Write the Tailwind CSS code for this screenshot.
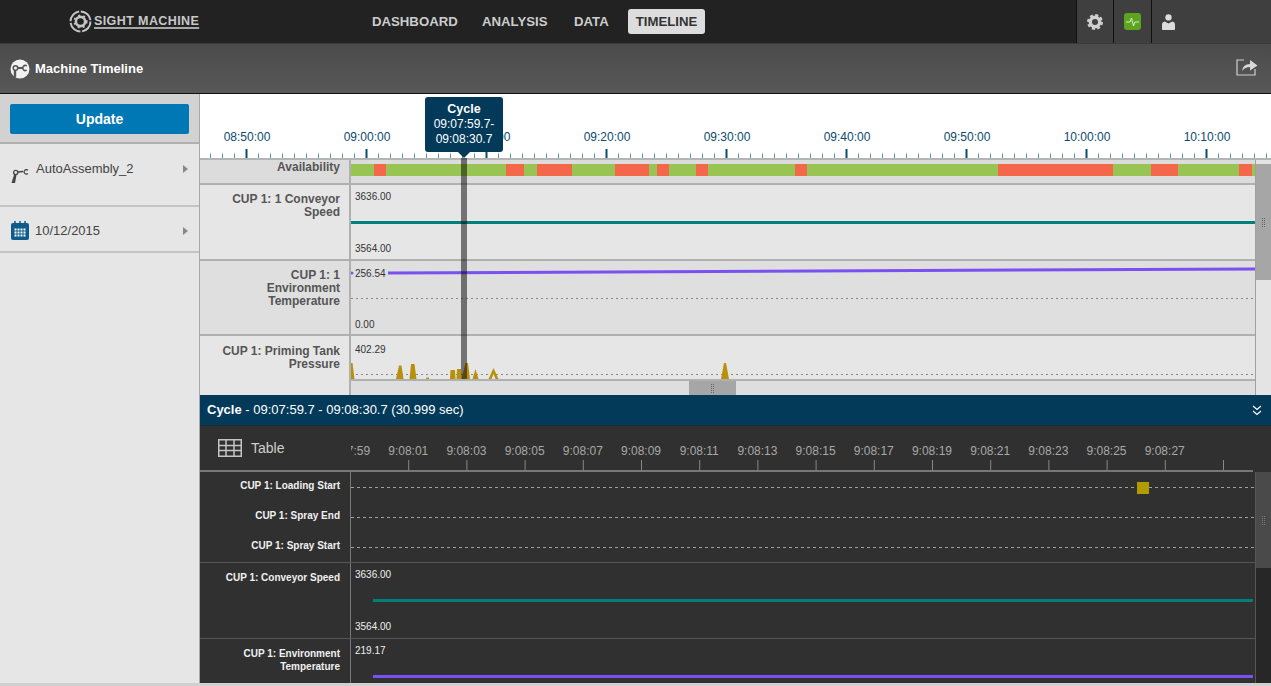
<!DOCTYPE html>
<html lang="en">
<head>
<meta charset="utf-8"/>
<title>Machine Timeline</title>
<script src="https://cdn.jsdelivr.net/npm/@tailwindcss/browser@4"></script>
</head>
<body class="w-[1271px] h-[686px] overflow-hidden bg-[#e6e6e6] font-['Liberation_Sans',Arial,sans-serif]">

<!-- top nav -->
<header class="h-[44px] flex bg-[#222222] border-b border-[#3a3a3a]">
  <div class="w-[372px] shrink-0 flex items-center pl-[69px]">
    <svg width="23" height="23" viewBox="0 0 23 23" fill="none" stroke="#c4c4c4">
      <circle cx="11.500" cy="11.500" r="10" stroke-width="2" stroke-dasharray="14 1.700"/>
      <circle cx="11.500" cy="11.500" r="4.600" stroke-width="2.600"/>
      <circle cx="11.500" cy="11.500" r="6.300" stroke-width="1.500" stroke-dasharray="2 3.300"/>
    </svg>
    <span class="ml-[2px] text-[12.500px] font-bold text-[#c8c8c8] tracking-[0.4px] underline decoration-2 decoration-[#a8a8a8] underline-offset-[2px] whitespace-nowrap">SIGHT MACHINE</span>
  </div>
  <nav class="flex items-center text-[13.200px] font-bold text-[#cccccc]">
    <a class="w-[110px]">DASHBOARD</a>
    <a class="w-[92px]">ANALYSIS</a>
    <a class="w-[54px]">DATA</a>
    <a class="w-[77px] h-[25px] flex items-center justify-center rounded-[3px] bg-[#dddddd] text-[#333333]">TIMELINE</a>
  </nav>
  <div class="ml-auto w-[195px] flex bg-[#3f3f3f] border-l border-[#111111]">
    <div class="w-[37px] flex items-center justify-center pr-[1px] border-r border-[#111111]">
      <svg width="16" height="16" viewBox="0 0 17 17" fill="none" stroke="#cfcfcf">
        <circle cx="8.500" cy="8.500" r="5" stroke-width="3.600"/>
        <circle cx="8.500" cy="8.500" r="7" stroke-width="3" stroke-dasharray="3.100 2.400"/>
      </svg>
    </div>
    <div class="w-[38px] flex items-center justify-center border-r border-[#111111]">
      <div class="w-[17px] h-[17px] rounded-[3px] bg-[#5ea51f] flex items-center justify-center">
        <svg width="13" height="11" viewBox="0 0 13 11" fill="none" stroke="#e8f3dc" stroke-width="0.900"><path d="M0 6h4l1.500-4 2 8 1.300-4H13"/></svg>
      </div>
    </div>
    <div class="w-[34px] flex items-center justify-center pr-[2px]">
      <svg width="13" height="16" viewBox="0 0 14 17" fill="#dcdcdc"><circle cx="7" cy="3.600" r="3.400"/><path d="M1 17a1 1 0 0 1-1-1v-4.500q0-3 3-3.500l4 2 4-2q3 .5 3 3.500V16a1 1 0 0 1-1 1z"/></svg>
    </div>
  </div>
</header>

<!-- title bar -->
<div class="h-[50px] flex items-center pl-[10px] pr-[13px] bg-gradient-to-b from-[#4b4b4b] to-[#585858] border-b border-[#111111]">
  <svg width="20" height="20" viewBox="0 0 20 20">
    <circle cx="10" cy="10" r="9.500" fill="#f2f2f2"/>
    <path d="M5 18V10" stroke="#555555" stroke-width="2.400"/>
    <circle cx="5.500" cy="9" r="2.300" fill="#f2f2f2" stroke="#555555" stroke-width="1.500"/>
    <path d="M7.500 9h5" stroke="#555555" stroke-width="2"/>
    <path d="M16.800 7a2.500 2.500 0 1 0 0 4" fill="none" stroke="#555555" stroke-width="1.500"/>
  </svg>
  <h1 class="ml-[5px] text-[13px] font-bold text-white">Machine Timeline</h1>
  <svg class="ml-auto mb-[3px]" width="22" height="18" viewBox="0 0 22 18" fill="none">
    <path d="M8 2H1v15h18v-6" stroke="#d0d0d0" stroke-width="1.200"/>
    <path d="M6 13q1-7 8-7V2l7.500 5.500L14 12.500V9q-5 0-8 4z" fill="#d8d8d8"/>
  </svg>
</div>

<div class="flex h-[589px]">
  <!-- sidebar -->
  <aside class="w-[200px] shrink-0 border-r border-[#a8a8a8] bg-[#e6e6e6]">
    <div class="h-[50px] px-[10px] pt-[10px] bg-[#d2d2d2] border-b-2 border-[#b0b0b0]">
      <button class="w-[179px] h-[30px] rounded-[2px] bg-[#0078b6] text-[14px] font-bold text-white">Update</button>
    </div>
    <div class="h-[63px] flex pl-[11px] pr-[11px] border-b-2 border-[#c4c4c4]">
      <svg class="mt-[25px]" width="18" height="14" viewBox="0 0 18 14" fill="none" stroke="#444444">
        <path d="M0.500 14L3 6H5.500L4 14Z" fill="#444444" stroke="none"/>
        <circle cx="4.700" cy="3.500" r="2.100" stroke-width="1.300"/>
        <path d="M6.800 3L12 2.500" stroke-width="1.400"/>
        <path d="M16.800 1.200a2.200 2.200 0 1 0 0 3.300" stroke-width="1.200"/>
      </svg>
      <span class="ml-[7px] mt-[17px] text-[13px] leading-[16px] text-[#444444]">AutoAssembly_2</span>
      <span class="ml-auto mt-[21px] w-0 h-0 border-y-[4px] border-y-transparent border-l-[5px] border-l-[#888888]"></span>
    </div>
    <div class="h-[46px] flex items-center pt-[3px] pl-[11px] pr-[11px] border-b-2 border-[#c4c4c4]">
      <svg width="18" height="19" viewBox="0 0 18 19">
        <rect y="2" width="18" height="17" rx="2" fill="#0d5c8c"/>
        <path d="M4 0v3M9 0v3M14 0v3" stroke="#0d5c8c" stroke-width="1.500"/>
        <path d="M3.500 8.500h11M3.500 11.500h11M3.500 14.500h11" stroke="#ffffff" stroke-width="2" stroke-dasharray="2 1"/>
      </svg>
      <span class="ml-[6px] text-[13px] text-[#444444]">10/12/2015</span>
      <span class="ml-auto w-0 h-0 border-y-[4px] border-y-transparent border-l-[5px] border-l-[#888888]"></span>
    </div>
  </aside>

  <main class="w-[1071px] flex flex-col">
    <!-- overview timeline -->
    <section class="relative h-[301px] shrink-0 flex flex-col">
      <div class="relative h-[64px] shrink-0 bg-white overflow-hidden">
        <div class="flex -ml-[13px] pt-[35px] text-[12px] leading-[16px] text-[#0c4a6e] text-center">
          <span class="w-[120px] shrink-0">08:50:00</span>
          <span class="w-[120px] shrink-0">09:00:00</span>
          <span class="w-[120px] shrink-0">09:10:00</span>
          <span class="w-[120px] shrink-0">09:20:00</span>
          <span class="w-[120px] shrink-0">09:30:00</span>
          <span class="w-[120px] shrink-0">09:40:00</span>
          <span class="w-[120px] shrink-0">09:50:00</span>
          <span class="w-[120px] shrink-0">10:00:00</span>
          <span class="w-[120px] shrink-0">10:10:00</span>
        </div>
        <svg class="absolute left-0 top-0" width="1071" height="64">
          <path d="M10 62H1071" stroke="#5b93b0" stroke-width="5" stroke-dasharray="1 11"/>
          <path d="M45.500 59.500H1071" stroke="#0c4a6e" stroke-width="9" stroke-dasharray="2 118"/>
        </svg>
      </div>

      <div class="flex flex-1 min-h-0 border-t-2 border-[#b4b4b4]">
        <div class="w-[1055px] flex flex-col">
          <!-- availability -->
          <div class="h-[25px] shrink-0 flex bg-[#dcdcdc] border-b-2 border-[#b0b0b0]">
            <div class="w-[151px] shrink-0 pr-[9px] text-right text-[12px] leading-[14px] font-bold text-[#555555] border-r-2 border-[#b0b0b0]">Availability</div>
            <svg class="mt-[4px]" width="904" height="12">
              <rect width="904" height="12" fill="#98c454"/>
              <g fill="#f4674a">
                <rect x="23" width="12" height="12"/>
                <rect x="155" width="18" height="12"/>
                <rect x="186" width="35" height="12"/>
                <rect x="264" width="34" height="12"/>
                <rect x="306" width="12" height="12"/>
                <rect x="345" width="12" height="12"/>
                <rect x="444" width="12" height="12"/>
                <rect x="647" width="115" height="12"/>
                <rect x="800" width="27" height="12"/>
                <rect x="888" width="13" height="12"/>
              </g>
            </svg>
          </div>
          <!-- conveyor speed -->
          <div class="h-[76px] shrink-0 flex bg-[#e6e6e6] border-b-2 border-[#b0b0b0]">
            <div class="w-[151px] shrink-0 pr-[9px] pt-[8px] text-right text-[12px] leading-[13px] font-bold text-[#555555] border-r-2 border-[#b0b0b0]">CUP 1: 1 Conveyor<br/>Speed</div>
            <div class="relative flex-1 flex flex-col justify-between pl-[4px] pt-[6px] pb-[4px] text-[10px] leading-[12px] text-[#333333]">
              <svg class="absolute left-0 top-0" width="904" height="74"><rect y="36" width="904" height="3" fill="#007f7c"/></svg>
              <span>3636.00</span><span>3564.00</span>
            </div>
          </div>
          <!-- environment temperature -->
          <div class="h-[75px] shrink-0 flex bg-[#dfdfdf] border-b-2 border-[#b0b0b0]">
            <div class="w-[151px] shrink-0 pr-[9px] pt-[8px] text-right text-[12px] leading-[13px] font-bold text-[#555555] border-r-2 border-[#b0b0b0]">CUP 1: 1<br/>Environment<br/>Temperature</div>
            <div class="relative flex-1 flex flex-col justify-between pl-[4px] pt-[7px] pb-[3px] text-[10px] leading-[12px] text-[#333333]">
              <svg class="absolute left-0 top-0" width="904" height="73" fill="none">
                <path d="M0 37.500H904" stroke="#888888" stroke-dasharray="2 3"/>
                <path d="M37 12L904 8" stroke="#7a50f0" stroke-width="3"/>
                <circle cx="1" cy="12" r="1.500" fill="#7a50f0"/>
              </svg>
              <span class="relative">256.54</span><span class="relative">0.00</span>
            </div>
          </div>
          <!-- priming tank pressure -->
          <div class="flex-1 min-h-0 flex bg-[#e6e6e6]">
            <div class="w-[151px] shrink-0 pr-[9px] pt-[9px] text-right text-[12px] leading-[13px] font-bold text-[#555555] border-r-2 border-[#b0b0b0]">CUP 1: Priming Tank<br/>Pressure</div>
            <div class="flex-1 flex flex-col">
              <div class="relative h-[43px] shrink-0 pl-[4px] pt-[8px] text-[10px] leading-[12px] text-[#333333]">
                <svg class="absolute left-0 top-0" width="904" height="43">
                  <path d="M0 38.500H904" stroke="#888888" stroke-dasharray="2 3"/>
                  <path fill="#b8900a" d="M0 43V27H1.500L3.500 43ZM45 43L48 29.500H50.500L52.500 43ZM58.500 43L60 28H63.500L65.500 43ZM75 43L75.500 41.500H78V43ZM99 43L99.500 34H104L104.500 43ZM105.500 43L106 33H110V43ZM110.500 43L114.500 27H117L119 43ZM121.500 43L124.500 33L127.500 43ZM137.500 43L142.500 32L147.500 43H144.500L142.500 38L140.500 43ZM370 43L373 27H375L378 43Z"/>
                </svg>
                <span class="relative">402.29</span>
              </div>
              <div class="h-[16px] shrink-0 flex bg-[#dedede] border-t-2 border-[#b0b0b0] pl-[338px]">
                <div class="w-[47px] flex items-center justify-center bg-[#a6a6a6]">
                  <span class="w-[3px] h-[9px] border-x border-dotted border-[#666666]"></span>
                </div>
              </div>
            </div>
          </div>
        </div>
        <!-- vertical scrollbar -->
        <div class="w-[16px] shrink-0 bg-[#e4e4e4] border-l border-[#a0a0a0] pt-[4px]">
          <div class="h-[116px] flex items-center justify-center bg-[#a6a6a6]">
            <span class="w-[3px] h-[9px] border-x border-dotted border-[#666666]"></span>
          </div>
        </div>
      </div>

      <!-- cycle tooltip and cursor -->
      <div class="absolute left-[261px] top-[64px] w-[6px] h-[221px] bg-black/50"></div>
      <div class="absolute left-[225px] top-[3px] w-[78px] h-[55px] rounded-[3px] bg-[#033a5a] pt-[5px] text-center text-[12px] leading-[15px] text-white">
        <b class="text-[12.500px]">Cycle</b><br/>09:07:59.7-<br/>09:08:30.7
      </div>
      <div class="absolute left-[258px] top-[58px] w-0 h-0 border-x-[6px] border-x-transparent border-t-[6px] border-t-[#033a5a]"></div>
    </section>

    <!-- cycle detail -->
    <section class="flex-1 min-h-0 flex flex-col bg-[#303030]">
      <div class="h-[31px] shrink-0 flex items-center pl-[7px] pr-[9px] bg-[#033a5a] border-b border-[#1b2b36] text-[13px] text-white">
        <span><b>Cycle</b> - 09:07:59.7 - 09:08:30.7 (30.999 sec)</span>
        <svg class="ml-auto" width="10" height="11" viewBox="0 0 10 11" fill="none" stroke="#ffffff" stroke-width="1.200"><path d="M1 1l4 3.500L9 1M1 6l4 3.500L9 6"/></svg>
      </div>
      <div class="h-[46px] shrink-0">
        <div class="w-[1053px] h-full flex border-b-2 border-[#777777]">
          <div class="w-[151px] shrink-0 flex items-center pl-[18px] text-[14px] text-[#cfcfcf]">
            <svg width="24" height="18" viewBox="0 0 24 18" fill="none" stroke="#c4c4c4" stroke-width="1.500">
              <rect x="0.750" y="0.750" width="22.500" height="16.500"/>
              <path d="M0 6.500H24M0 11.500H24M8 0V18M16 0V18"/>
            </svg>
            <span class="ml-[9px]">Table</span>
          </div>
          <div class="relative flex-1 overflow-hidden">
            <div class="flex -ml-[30px] pt-[17px] text-[12px] leading-[16px] text-[#a8a8a8] text-center">
              <span class="w-[58.200px] shrink-0">9:07:59</span>
              <span class="w-[58.200px] shrink-0">9:08:01</span>
              <span class="w-[58.200px] shrink-0">9:08:03</span>
              <span class="w-[58.200px] shrink-0">9:08:05</span>
              <span class="w-[58.200px] shrink-0">9:08:07</span>
              <span class="w-[58.200px] shrink-0">9:08:09</span>
              <span class="w-[58.200px] shrink-0">9:08:11</span>
              <span class="w-[58.200px] shrink-0">9:08:13</span>
              <span class="w-[58.200px] shrink-0">9:08:15</span>
              <span class="w-[58.200px] shrink-0">9:08:17</span>
              <span class="w-[58.200px] shrink-0">9:08:19</span>
              <span class="w-[58.200px] shrink-0">9:08:21</span>
              <span class="w-[58.200px] shrink-0">9:08:23</span>
              <span class="w-[58.200px] shrink-0">9:08:25</span>
              <span class="w-[58.200px] shrink-0">9:08:27</span>
            </div>
            <svg class="absolute left-0 bottom-0" width="902" height="10">
              <path d="M-1 5H902" stroke="#888888" stroke-width="10" stroke-dasharray="1 57.200"/>
            </svg>
          </div>
        </div>
      </div>
      <div class="flex flex-1 min-h-0">
        <div class="w-[1055px] flex flex-col">
          <!-- event rows -->
          <div class="h-[91px] shrink-0 flex border-b border-[#555555]">
            <div class="w-[151px] shrink-0 flex flex-col pr-[10px] pt-[6px] gap-[15px] text-right text-[10px] leading-[15px] font-bold text-[#f0f0f0] border-r border-[#777777]">
              <span>CUP 1: Loading Start</span>
              <span>CUP 1: Spray End</span>
              <span>CUP 1: Spray Start</span>
            </div>
            <svg width="904" height="90" fill="none">
              <path d="M0 15.500H904M0 45.500H904M0 75.500H904" stroke="#a0a0a0" stroke-dasharray="3 3"/>
              <rect x="786" y="10" width="12" height="12" fill="#b09c00"/>
            </svg>
          </div>
          <!-- conveyor speed -->
          <div class="h-[76px] shrink-0 flex border-b border-[#555555]">
            <div class="w-[151px] shrink-0 pr-[10px] pt-[8px] text-right text-[10px] leading-[13px] font-bold text-[#f0f0f0] border-r border-[#777777]">CUP 1: Conveyor Speed</div>
            <div class="relative flex-1 flex flex-col justify-between pl-[4px] pt-[6px] pb-[5px] text-[10px] leading-[12px] text-[#eeeeee]">
              <svg class="absolute left-0 top-0" width="904" height="75"><rect x="22" y="36" width="880" height="3" fill="#007f7c"/></svg>
              <span class="relative">3636.00</span><span class="relative">3564.00</span>
            </div>
          </div>
          <!-- environment temperature -->
          <div class="flex-1 min-h-0 flex">
            <div class="w-[151px] shrink-0 pr-[10px] pt-[8px] text-right text-[10px] leading-[13px] font-bold text-[#f0f0f0] border-r border-[#777777]">CUP 1: Environment<br/>Temperature</div>
            <div class="relative flex-1 pl-[4px] pt-[6px] text-[10px] leading-[12px] text-[#eeeeee]">
              <svg class="absolute left-0 top-0" width="904" height="44"><rect x="22" y="36" width="880" height="3" fill="#7a50f0"/></svg>
              <span class="relative">219.17</span>
            </div>
          </div>
        </div>
        <!-- vertical scrollbar -->
        <div class="w-[16px] shrink-0 bg-[#272727] border-l border-[#555555]">
          <div class="h-[96px] flex items-center justify-center bg-[#4a4a4a]">
            <span class="w-[3px] h-[9px] border-x border-dotted border-[#777777]"></span>
          </div>
        </div>
      </div>
    </section>
  </main>
</div>
<div class="h-[3px] bg-[#d0d0d0]"></div>
</body>
</html>
